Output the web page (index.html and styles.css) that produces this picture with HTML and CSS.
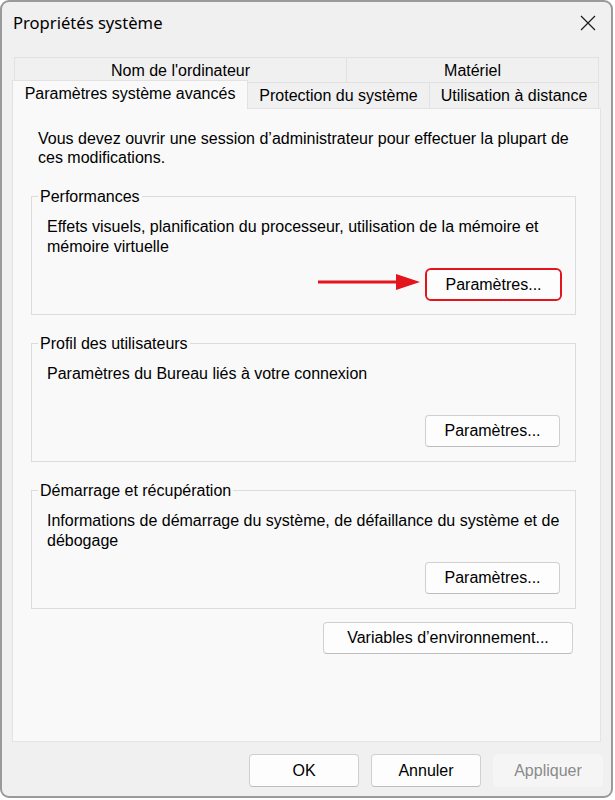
FILE: index.html
```html
<!DOCTYPE html>
<html lang="fr">
<head>
  <meta charset="UTF-8">
  <meta name="viewport" content="width=device-width, initial-scale=1.0">
  <title>Propriétés système</title>
  <link rel="stylesheet" href="styles.css">
</head>
<body>
  <div class="window">
    <!-- Barre de titre -->
    <div class="titlebar">
      <span class="title">Propriétés système</span>
      <svg class="close" width="16" height="16" viewBox="0 0 16 16">
        <path d="M1 1 L15 15 M15 1 L1 15" stroke="#1a1a1a" stroke-width="1.2" fill="none"/>
      </svg>
    </div>

    <!-- Onglets -->
    <div class="tabs">
      <div class="tab-row">
        <div class="tab tab-nom">Nom de l'ordinateur</div>
        <div class="tab tab-materiel">Matériel</div>
      </div>
      <div class="tab-row">
        <div class="tab tab-avances active">Paramètres système avancés</div>
        <div class="tab tab-protection">Protection du système</div>
        <div class="tab tab-distance">Utilisation à distance</div>
      </div>
    </div>

    <div class="panel">
      <p class="intro">Vous devez ouvrir une session d’administrateur pour effectuer la plupart de ces modifications.</p>

      <div class="group">
        <span class="legend">Performances</span>
        <p class="group-text">Effets visuels, planification du processeur, utilisation de la mémoire et mémoire virtuelle</p>
        <div class="group-actions">
          <div class="highlight">
            <button class="btn">Paramètres...</button>
          </div>
        </div>
        <svg class="arrow" width="104" height="20" viewBox="0 0 104 20">
          <path d="M0 10 H80" stroke="#e3141b" stroke-width="3.2" stroke-linecap="round"/>
          <path d="M78 2 L102 10 L78 18 Z" fill="#e3141b"/>
        </svg>
      </div>

      <div class="group">
        <span class="legend">Profil des utilisateurs</span>
        <p class="group-text">Paramètres du Bureau liés à votre connexion</p>
        <div class="group-actions">
          <button class="btn">Paramètres...</button>
        </div>
      </div>

      <div class="group">
        <span class="legend">Démarrage et récupération</span>
        <p class="group-text">Informations de démarrage du système, de défaillance du système et de débogage</p>
        <div class="group-actions">
          <button class="btn">Paramètres...</button>
        </div>
      </div>

      <div class="env-row">
        <button class="btn btn-env">Variables d’environnement...</button>
      </div>
    </div>

    <div class="footer">
      <button class="btn btn-footer">OK</button>
      <button class="btn btn-footer">Annuler</button>
      <button class="btn btn-footer disabled">Appliquer</button>
    </div>
  </div>
</body>
</html>
```

FILE: styles.css
```css
* {
  box-sizing: border-box;
}

body {
  margin: 0;
  background: #ffffff;
  font-family: "Liberation Sans", Arial, sans-serif;
  font-size: 16px;
  color: #000;
}

.window {
  width: 613px;
  height: 798px;
  border: 2px solid #9a9a9a;
  border-radius: 9px;
  background: #f0f0f0;
  display: flex;
  flex-direction: column;
  overflow: hidden;
}

.titlebar {
  height: 55px;
  flex-shrink: 0;
  padding: 0 15px 0 11px;
  display: flex;
  align-items: flex-start;
  justify-content: space-between;
}

.title {
  font-family: "Noto Sans", sans-serif;
  font-size: 16.6px;
  margin-top: 9px;
  color: #000;
}

.close {
  margin-top: 13px;
}

.tabs {
  padding: 0 12px 0 10px;
  flex-shrink: 0;
}

.tab-row {
  display: flex;
  height: 25px;
}

.tab-row + .tab-row {
  height: 26px;
}

.tab {
  display: flex;
  align-items: center;
  justify-content: center;
  border: 1px solid #e1e1e1;
  border-bottom: none;
  background: #f0f0f0;
  white-space: nowrap;
  margin-left: -1px;
  padding-top: 1px;
}

.tab-nom {
  width: 333px;
  margin-left: 2px;
}

.tab-materiel {
  width: 253px;
}

.tab-avances {
  width: 236px;
}

.tab-protection {
  width: 183px;
}

.tab-distance {
  width: 170px;
}

.tab.active {
  background: #f9f9f9;
  height: 29px;
  margin-top: -2px;
  margin-left: 0;
  position: relative;
  z-index: 1;
  padding: 0 0 3px;
}

.panel {
  margin: 0 10px;
  height: 634px;
  flex-shrink: 0;
  background: #f9f9f9;
  border: 1px solid #e3e3e3;
  padding: 20px 24px 0 18px;
}

.intro {
  margin: 0 0 29px 7px;
  line-height: 19px;
}

.group {
  position: relative;
  height: 119px;
  border: 1px solid #dcdcdc;
  margin-bottom: 28px;
  padding: 20px 15px 14px 15px;
  display: flex;
  flex-direction: column;
}

.legend {
  position: absolute;
  top: -10px;
  left: 6px;
  padding: 0 2px;
  background: #f9f9f9;
  line-height: 19px;
}

.group-text {
  margin: 0;
  line-height: 20px;
}

.group-actions {
  margin-top: auto;
  display: flex;
  justify-content: flex-end;
}

.btn {
  font-family: "Liberation Sans", Arial, sans-serif;
  font-size: 16px;
  color: #000;
  background: #fdfdfd;
  border: 1px solid #d0d0d0;
  border-bottom-color: #bdbdbd;
  border-radius: 4px;
  height: 32px;
  width: 135px;
  padding: 0;
}

.highlight {
  border: 2.5px solid #e3141b;
  border-radius: 6px;
  margin: -2px -2px -1px 0;
}

.highlight .btn {
  border-color: #fdfdfd;
  height: 29px;
  width: 133px;
}

.arrow {
  position: absolute;
  left: 286px;
  top: 75px;
}

.group:nth-of-type(3) {
  margin-bottom: 13px;
}

.env-row {
  display: flex;
  justify-content: flex-end;
  padding-right: 3px;
}

.btn-env {
  width: 250px;
}

.footer {
  display: flex;
  justify-content: flex-end;
  gap: 12px;
  padding: 12px 8px 0 0;
}

.btn-footer {
  width: 110px;
  height: 33px;
}

.btn.disabled {
  background: #f5f5f5;
  border-color: #f5f5f5;
  color: #8a8a8a;
}
```
